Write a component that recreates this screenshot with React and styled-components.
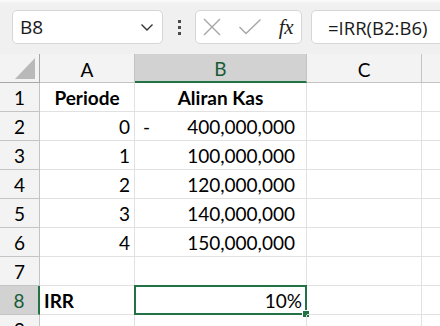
import React from 'react';
import styled, { createGlobalStyle } from 'styled-components';

const Global = createGlobalStyle`
  html, body {
    margin: 0;
    padding: 0;
    background: #fff;
    overflow: hidden;
  }
  body {
    width: 440px;
    height: 326px;
    font-family: Lato, "Liberation Sans", sans-serif;
  }
`;

const Page = styled.div`
  width: 440px;
  height: 326px;
  overflow: hidden;
  display: flex;
  flex-direction: column;
`;

const Toolbar = styled.div`
  height: 54px;
  flex: none;
  display: flex;
  align-items: center;
  padding-left: 12px;
  box-sizing: border-box;
  background: linear-gradient(#fbfbfb 0px, #f0f0f0 4px, #f0f0f0 100%);
  overflow: hidden;
`;

const Box = styled.div`
  height: 34px;
  box-sizing: border-box;
  background: #fff;
  border: 1px solid #d6d6d6;
  border-radius: 5px;
  display: flex;
  align-items: center;
  flex: none;
`;

const NameBox = styled(Box)`
  width: 151px;
  padding: 0 8px 0 7px;
  justify-content: space-between;
  font-family: "Open Sans", "Noto Sans", sans-serif;
  font-size: 19px;
  color: #1a1a1a;
`;

const Kebab = styled.div`
  width: 32px;
  flex: none;
  display: flex;
  flex-direction: column;
  align-items: center;
  gap: 3px;
  span {
    width: 3px;
    height: 3px;
    background: #4a4a4a;
  }
`;

const FxGroup = styled(Box)`
  width: 107px;
  padding: 0 6px 0 6px;
  justify-content: space-between;
`;

const Fx = styled.span`
  font-family: "Liberation Serif", serif;
  font-style: italic;
  font-size: 21px;
  color: #222;
  padding-right: 2px;
  letter-spacing: -0.5px;
`;

const FormulaBox = styled(Box)`
  width: 160px;
  margin-left: 9px;
  padding-left: 16px;
  font-family: "Open Sans", "Noto Sans", sans-serif;
  font-size: 18.5px;
  color: #1a1a1a;
`;

const Sheet = styled.div`
  display: grid;
  grid-template-columns: 40px 95px 172px 115px 40px;
  grid-auto-rows: 29px;
  font-size: 19px;
  color: #000;
`;

const Head = styled.div`
  box-sizing: border-box;
  background: ${(p) => (p.$active ? '#d2d2d2' : '#f3f3f3')};
  color: ${(p) => (p.$active ? '#185c37' : '#000')};
  border-right: ${(p) => (p.$rowActive ? '2px solid #217346' : '1px solid #c4c4c4')};
  border-bottom: ${(p) => (p.$colActive ? '2px solid #217346' : '1px solid #c4c4c4')};
  display: flex;
  align-items: center;
  justify-content: center;
  padding-top: ${(p) => (p.$colHead ? '2px' : '0')};
  position: relative;
`;

const Corner = styled(Head)`
  border-bottom: 1px solid #a8a8a8;
  border-right: 1px solid #a8a8a8;
  &::after {
    content: '';
    position: absolute;
    right: 4px;
    bottom: 3px;
    width: 0;
    height: 0;
    border-left: 20px solid transparent;
    border-bottom: 21px solid #b9b9b9;
  }
`;

const Cell = styled.div`
  box-sizing: border-box;
  border-right: 1px solid #e1e1e1;
  border-bottom: 1px solid #e1e1e1;
  display: flex;
  align-items: center;
  justify-content: ${(p) => p.$align || 'flex-start'};
  padding: 1px 4px 0 4px;
  font-weight: ${(p) => (p.$bold ? 700 : 400)};
  position: relative;
  white-space: nowrap;
`;

const Accounting = styled(Cell)`
  justify-content: space-between;
  padding-left: 8px;
  padding-right: 11px;
`;

const Selection = styled.div`
  position: absolute;
  left: -1px;
  top: -1px;
  right: -1px;
  bottom: -1px;
  border: 2px solid #217346;
  pointer-events: none;
  &::after {
    content: '';
    position: absolute;
    right: -5px;
    bottom: -5px;
    width: 6px;
    height: 6px;
    background: #217346;
    border: 1px solid #fff;
  }
`;

const cols = ['A', 'B', 'C', ''];

const flows = [
  [0, '400,000,000', true],
  [1, '100,000,000'],
  [2, '120,000,000'],
  [3, '140,000,000'],
  [4, '150,000,000'],
];

function Chevron() {
  return (
    <svg width="14" height="9" viewBox="0 0 14 9">
      <path d="M1.5 1.5 L7 7 L12.5 1.5" fill="none" stroke="#333" strokeWidth="1.4" />
    </svg>
  );
}

function Cross() {
  return (
    <svg width="20" height="18" viewBox="0 0 20 18">
      <path d="M2 1 L18 17 M18 1 L2 17" stroke="#a6a6a6" strokeWidth="1.4" fill="none" />
    </svg>
  );
}

function Check() {
  return (
    <svg width="24" height="18" viewBox="0 0 24 18">
      <path d="M1.5 9 L8 15.5 L22.5 1.5" stroke="#a6a6a6" strokeWidth="1.4" fill="none" />
    </svg>
  );
}

export default function App() {
  return (
    <Page>
      <Global />
      <Toolbar>
        <NameBox>
          <span>B8</span>
          <Chevron />
        </NameBox>
        <Kebab>
          <span />
          <span />
          <span />
        </Kebab>
        <FxGroup>
          <Cross />
          <Check />
          <Fx>fx</Fx>
        </FxGroup>
        <FormulaBox>=IRR(B2:B6)</FormulaBox>
      </Toolbar>
      <Sheet>
        <Corner />
        {cols.map((c, i) => (
          <Head key={i} $colHead $active={c === 'B'} $colActive={c === 'B'}>
            {c}
          </Head>
        ))}

        <Head>1</Head>
        <Cell $bold $align="center">Periode</Cell>
        <Cell $bold $align="center">Aliran Kas</Cell>
        <Cell />
        <Cell />

        {flows.map(([p, v, neg], i) => (
          <React.Fragment key={p}>
            <Head>{i + 2}</Head>
            <Cell $align="flex-end">{p}</Cell>
            <Accounting>
              <span>{neg ? '-' : ''}</span>
              <span>{v}</span>
            </Accounting>
            <Cell />
            <Cell />
          </React.Fragment>
        ))}

        <Head>7</Head>
        <Cell />
        <Cell />
        <Cell />
        <Cell />

        <Head $active $rowActive>8</Head>
        <Cell $bold>IRR</Cell>
        <Cell $align="flex-end">
          10%
          <Selection />
        </Cell>
        <Cell />
        <Cell />

        <Head>9</Head>
        <Cell />
        <Cell />
        <Cell />
        <Cell />
      </Sheet>
    </Page>
  );
}
